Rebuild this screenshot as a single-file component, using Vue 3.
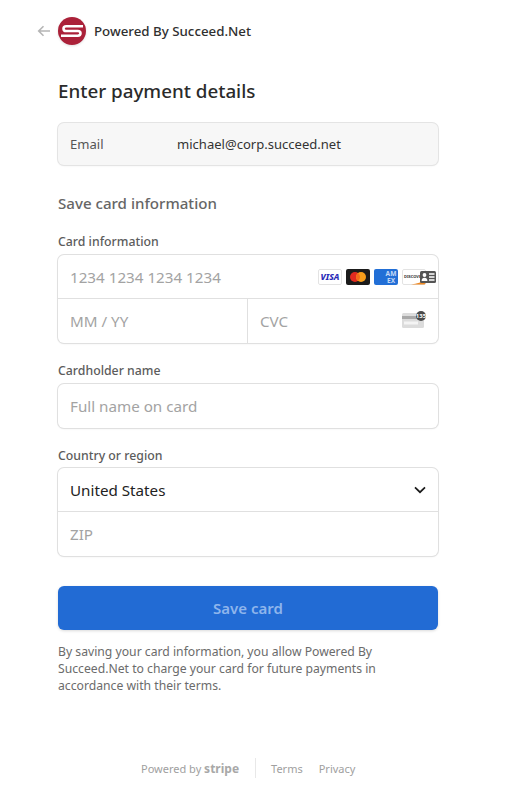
<script setup>
const brands = ['visa', 'mc', 'amex', 'disc']
</script>

<template>
  <main class="page">
    <header class="top">
      <svg class="back" width="14" height="12" viewBox="0 0 14 12">
        <path d="M13 6H2M6.5 1.2 1.7 6l4.8 4.8" fill="none" stroke="#b5b5b5" stroke-width="1.6" />
      </svg>
      <svg class="logo" width="28" height="28" viewBox="0 0 28 28">
        <circle cx="14" cy="14" r="14" fill="#ab2139" />
        <path d="M25 9.3H8.2C4.6 9.3 4.6 14 8.2 14H19.8C23.4 14 23.4 18.7 19.8 18.7H3" fill="none" stroke="#fff" stroke-width="2.6" />
      </svg>
      <span class="merchant">Powered By Succeed.Net</span>
    </header>

    <section class="form">
      <h1>Enter payment details</h1>

      <div class="email">
        <span class="email-label">Email</span>
        <span class="email-value">michael@corp.succeed.net</span>
      </div>

      <h2>Save card information</h2>

      <label class="first">Card information</label>
      <div class="box">
        <div class="row card-row">
          <span class="ph">1234 1234 1234 1234</span>
          <div class="brands">
            <svg v-for="b in brands" :key="b" width="24" height="16" viewBox="0 0 24 16">
              <template v-if="b === 'visa'">
                <rect x=".5" y=".5" width="23" height="15" rx="1.5" fill="#fff" stroke="#e3e3e3" />
                <text x="12" y="11.4" text-anchor="middle" class="visa">VISA</text>
              </template>
              <template v-else-if="b === 'mc'">
                <rect width="24" height="16" rx="2" fill="#1b1b1b" />
                <circle cx="9" cy="8" r="5" fill="#e02a20" />
                <circle cx="15" cy="8" r="5" fill="#f79e1b" />
                <path d="M12 4a5 5 0 0 1 0 8 5 5 0 0 1 0-8z" fill="#f26a1b" />
              </template>
              <template v-else-if="b === 'amex'">
                <rect width="24" height="16" rx="2" fill="#226fd6" />
                <text x="17" y="7.2" text-anchor="middle" class="amex">AM</text>
                <text x="17" y="13.6" text-anchor="middle" class="amex">EX</text>
              </template>
              <template v-else>
                <rect x=".5" y=".5" width="23" height="15" rx="1.5" fill="#fff" stroke="#e3e3e3" />
                <path d="M9 15.5C15 15 20 13 23.5 10.5V14a1.5 1.5 0 0 1-1.5 1.5z" fill="#f08a24" />
                <text x="2" y="9" class="disc">DISCOVER</text>
              </template>
            </svg>
            <svg class="contact" width="16" height="12" viewBox="0 0 16 12">
              <rect width="16" height="12" rx="1.5" fill="#555" />
              <circle cx="4.5" cy="4" r="1.9" fill="#fff" />
              <path d="M1.6 10c0-2.4 1.2-3.3 2.9-3.3S7.4 7.6 7.4 10z" fill="#fff" />
              <path d="M9 3h5.5M9 6h5.5M9 9h5.5" stroke="#fff" stroke-width="1.3" />
            </svg>
          </div>
        </div>
        <div class="row split">
          <div class="cell exp"><span class="ph">MM / YY</span></div>
          <div class="cell cvc">
            <span class="ph">CVC</span>
            <svg class="cvc-icon" width="24" height="17" viewBox="0 0 24 17">
              <rect y="2" width="22" height="15" rx="1.5" fill="#dcdcdc" />
              <rect y="5" width="22" height="3" fill="#a9a9a9" />
              <rect x="2" y="10.5" width="14" height="3" fill="#f4f4f4" />
              <circle cx="19" cy="5" r="5" fill="#4a4a4a" />
              <text x="19" y="7" text-anchor="middle" class="cvc-num">135</text>
            </svg>
          </div>
        </div>
      </div>

      <label class="holder">Cardholder name</label>
      <div class="box">
        <div class="row single"><span class="ph">Full name on card</span></div>
      </div>

      <label class="country">Country or region</label>
      <div class="box">
        <div class="row select">
          <span class="val">United States</span>
          <svg width="12" height="8" viewBox="0 0 12 8">
            <path d="M1 1.4 6 6.2l5-4.8" fill="none" stroke="#1a1a1a" stroke-width="1.7" />
          </svg>
        </div>
        <div class="row single zip"><span class="ph">ZIP</span></div>
      </div>

      <button class="save">Save card</button>

      <p class="terms">
        By saving your card information, you allow Powered By Succeed.Net to charge your card for future payments in accordance with their terms.
      </p>
    </section>

    <footer class="foot">
      <span class="by">Powered by <b>stripe</b></span>
      <span class="sep"></span>
      <a>Terms</a>
      <a>Privacy</a>
    </footer>
  </main>
</template>

<style>
body {
  background: #fff;
}
</style>

<style scoped>
.page {
  width: 515px;
  height: 798px;
  box-sizing: border-box;
  padding: 17px 0 0 37px;
  font-family: 'Noto Sans', 'Open Sans', sans-serif;
  color: #1a1a1a;
  overflow: hidden;
}

.top {
  display: flex;
  align-items: center;
  height: 28px;
}

.back {
  margin-right: 7px;
}

.logo {
  margin-right: 8px;
  filter: drop-shadow(0 1px 1px rgba(0, 0, 0, 0.12));
}

.merchant {
  font-size: 13.3px;
  font-weight: 500;
  color: #303030;
}

.form {
  width: 380px;
  margin: 32px 0 0 21px;
}

h1 {
  margin: 0;
  font-size: 18.8px;
  line-height: 28px;
  font-weight: 500;
  color: #2b2b2b;
}

.email {
  display: flex;
  align-items: center;
  height: 42px;
  box-sizing: border-box;
  margin-top: 18px;
  padding: 0 12px;
  background: #f7f7f7;
  border-radius: 6px;
  box-shadow: 0 0 0 1px #e4e4e4, 0 1px 2px rgba(0, 0, 0, 0.08);
  font-size: 13.05px;
}

.email-label {
  width: 107px;
  color: #555;
  font-weight: 400;
}

.email-value {
  color: #333;
}

h2 {
  margin: 26px 0 0;
  font-size: 15.1px;
  line-height: 24px;
  font-weight: 500;
  color: #666;
}

label {
  display: block;
  font-size: 12.3px;
  line-height: 18px;
  font-weight: 500;
  color: #5c5c5c;
}

label.first {
  margin: 18px 0 4px;
}

label.holder {
  margin: 19px 0 4px;
}

label.country {
  margin: 19px 0 3px;
}

.box {
  border-radius: 6px;
  background: #fff;
  box-shadow: 0 0 0 1px #e0e0e0, 0 1px 2px rgba(0, 0, 0, 0.08);
}

.row {
  display: flex;
  align-items: center;
  box-sizing: border-box;
}

.card-row {
  justify-content: space-between;
  height: 44px;
  padding: 0 2px 0 12px;
  border-bottom: 1px solid #e0e0e0;
}

.brands {
  display: flex;
  gap: 4px;
  align-items: center;
}

.contact {
  margin-left: -10px;
}

.split {
  height: 44px;
}

.cell {
  height: 100%;
  display: flex;
  align-items: center;
  padding-left: 12px;
  box-sizing: border-box;
}

.exp {
  width: 190px;
  border-right: 1px solid #e0e0e0;
}

.cvc {
  flex: 1;
  justify-content: space-between;
  padding-right: 12px;
}

.cvc-icon {
  margin-top: -3px;
}

.single {
  height: 44px;
  padding-left: 12px;
}

.select {
  justify-content: space-between;
  height: 44px;
  padding: 0 12px;
  border-bottom: 1px solid #e0e0e0;
}

.zip {
  height: 44px;
}

.ph {
  font-size: 15.2px;
  color: #a3a3a3;
}

.val {
  font-size: 15.2px;
  color: #222;
}

.visa {
  font: italic 800 8.6px 'Noto Sans', sans-serif;
  fill: #2a2ab8;
}

.amex {
  font: 700 6.6px 'Noto Sans', sans-serif;
  fill: #c4d9f6;
}

.disc {
  font: 700 4px 'Noto Sans', sans-serif;
  fill: #333;
}

.cvc-num {
  font: 700 6px 'Noto Sans', sans-serif;
  fill: #fff;
}

.save {
  display: block;
  width: 380px;
  height: 44px;
  margin-top: 30px;
  border: 0;
  border-radius: 6px;
  background: #226bd4;
  box-shadow: 0 1px 3px rgba(0, 0, 0, 0.15);
  color: #8eb5ec;
  font-family: inherit;
  font-size: 15px;
  font-weight: 600;
}

.terms {
  margin: 13px 0 0;
  font-size: 12.2px;
  line-height: 17px;
  color: #6b6b6b;
}

.foot {
  display: flex;
  align-items: center;
  margin: 63px 0 0 104px;
  height: 22px;
  font-size: 11px;
  color: #a0a0a0;
}

.by b {
  font-size: 12px;
  font-weight: 700;
  color: #a8a8a8;
}

.sep {
  width: 1px;
  height: 20px;
  background: #e8e8e8;
  margin: 0 15px 0 16px;
}

.foot a + a {
  margin-left: 16px;
}
</style>
